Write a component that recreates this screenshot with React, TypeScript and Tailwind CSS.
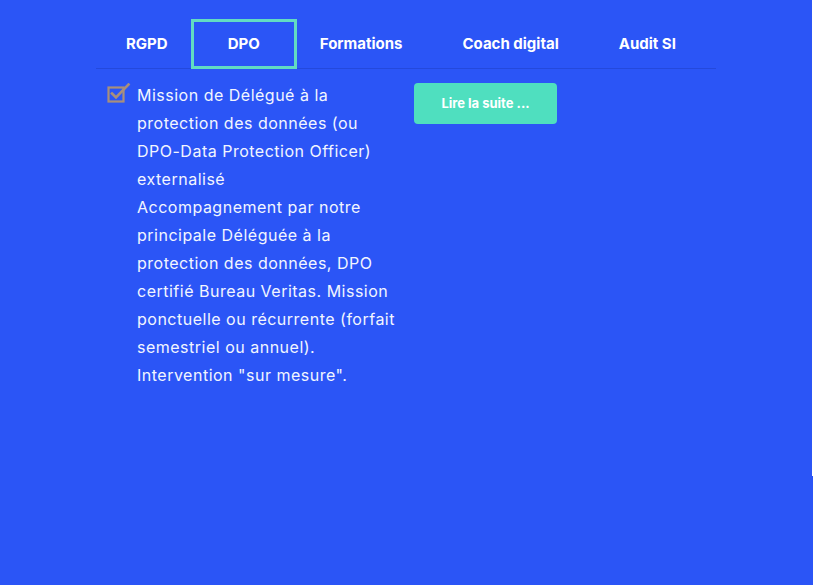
const tabs = ["RGPD", "DPO", "Formations", "Coach digital", "Audit SI"];

const lines = [
  "Mission de Délégué à la",
  "protection des données (ou",
  "DPO-Data Protection Officer)",
  "externalisé",
  "Accompagnement par notre",
  "principale Déléguée à la",
  "protection des données, DPO",
  "certifié Bureau Veritas. Mission",
  "ponctuelle ou récurrente (forfait",
  "semestriel ou annuel).",
  'Intervention "sur mesure".',
];

function CheckIcon() {
  return (
    <svg width="24" height="20" viewBox="0 0 24 20" fill="none" className="shrink-0">
      <rect x="1.5" y="4.5" width="15" height="14" stroke="#a88f7c" strokeWidth="2.2" />
      <path d="M5 10.5 L9 14.5 L21.5 1.5" stroke="#a88f7c" strokeWidth="2.6" strokeLinecap="square" />
    </svg>
  );
}

export default function App() {
  return (
    <div className="flex w-[813px] h-[585px] bg-[#2b55f6] font-['Inter','Liberation_Sans',sans-serif]">
      <div className="flex-1">
        <div className="ml-[96px] w-[620px] pt-[26px] border-b border-[#2449dc]">
          <div className="flex items-center pb-[6px]">
            {tabs.map((t) => (
              <div
                key={t}
                className={`px-[30px] py-[8px] text-[15px] leading-[20px] font-bold text-white ${
                  t === "DPO" ? "outline-[3px] outline-solid outline-[#62dcc2] outline-offset-[4px]" : ""
                }`}
              >
                {t}
              </div>
            ))}
          </div>
        </div>
        <div className="flex items-start ml-[107px] mt-[12px]">
          <div className="mt-[2px]">
            <CheckIcon />
          </div>
          <p className="ml-[6px] w-[258px] text-[16px] leading-[28px] tracking-[0.5px] text-[#f2f5ff] whitespace-nowrap">
            {lines.map((l) => (
              <span key={l} className="block">
                {l}
              </span>
            ))}
          </p>
          <button className="ml-[19px] mt-[2px] w-[143px] h-[41px] rounded-[4px] bg-[#4fdfbf] text-[13px] font-bold text-white">
            Lire la suite ...
          </button>
        </div>
      </div>
      <div className="w-px h-[476px] bg-white" />
    </div>
  );
}
